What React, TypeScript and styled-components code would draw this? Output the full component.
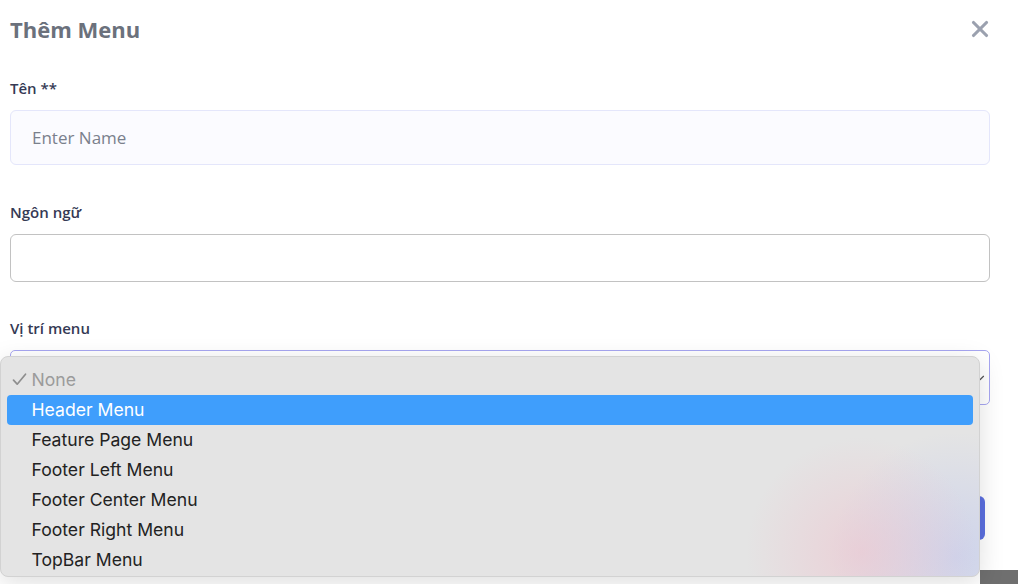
import React from "react";
import styled, { createGlobalStyle } from "styled-components";
import { X, ChevronDown } from "lucide-react";

const GlobalStyle = createGlobalStyle`
  html, body {
    margin: 0;
    padding: 0;
    background: #ffffff;
    overflow: hidden;
  }
  body {
    font-family: "Open Sans", "Noto Sans", sans-serif;
  }
`;

const ModalStyled = styled.div`
  display: flex;
  flex-direction: column;
  height: 570px;
  padding: 0 28px 0 10px;
  background: #ffffff;
`;

const HeaderStyled = styled.div`
  display: flex;
  align-items: center;
  justify-content: space-between;
  height: 58px;
`;

const TitleStyled = styled.h2`
  margin: 0;
  font-size: 22px;
  font-weight: 700;
  color: #6b717c;
`;

const CloseButtonStyled = styled.button`
  display: flex;
  align-items: center;
  justify-content: center;
  width: 28px;
  height: 28px;
  margin-right: -4px;
  padding: 0;
  border: none;
  background: transparent;
  color: #9ba1af;
`;

const FieldStyled = styled.div<{ $gap: number }>`
  display: flex;
  flex-direction: column;
  margin-top: ${(p) => p.$gap}px;
`;

const LabelStyled = styled.label`
  height: 20px;
  line-height: 20px;
  margin-bottom: 12px;
  font-size: 15px;
  font-weight: 600;
  color: #353a55;
`;

const TextInputStyled = styled.input<{ $tinted?: boolean }>`
  box-sizing: border-box;
  height: ${(p) => (p.$tinted ? 55 : 48)}px;
  padding: 0 21px;
  border: ${(p) => (p.$tinted ? "1px solid #e4e6fb" : "1.5px solid #c2c2c2")};
  border-radius: 6px;
  background: ${(p) => (p.$tinted ? "#fbfbff" : "#ffffff")};
  font-family: "Open Sans", "Noto Sans", sans-serif;
  font-size: 17px;
  color: #333;
  outline: none;

  &::placeholder {
    color: #7a808c;
  }
`;

const SelectBoxStyled = styled.div`
  position: relative;
  box-sizing: border-box;
  display: flex;
  align-items: center;
  justify-content: flex-end;
  height: 55px;
  padding-right: 2px;
  border: 1.5px solid #a7a6f1;
  border-radius: 5px;
  background: #ffffff;
  color: #555;
`;

const FooterStyled = styled.div`
  display: flex;
  justify-content: flex-end;
  margin-top: 91px;
  margin-right: 5px;
`;

const SaveButtonStyled = styled.button`
  height: 44px;
  width: 110px;
  border: none;
  border-radius: 6px;
  background: #5b6fe0;
  color: #fff;
  font-size: 15px;
`;

const BottomStripStyled = styled.div`
  display: flex;
  height: 14px;
  background: #6f6f6f;
`;

const StripWhiteStyled = styled.div`
  width: 980px;
  background: #ffffff;
`;

const DropdownStyled = styled.ul`
  position: absolute;
  top: 4.5px;
  left: -11.5px;
  box-sizing: border-box;
  width: 980px;
  height: 221px;
  margin: 0;
  padding: 8px 0 3px;
  list-style: none;
  border-radius: 8px;
  border: 1px solid #d2d2d2;
  background:
    radial-gradient(circle at 860px 195px, rgba(240, 192, 204, 0.55), rgba(240, 192, 204, 0) 115px),
    radial-gradient(circle at 955px 200px, rgba(196, 204, 238, 0.7), rgba(196, 204, 238, 0) 125px),
    #e4e4e4;
  box-shadow: 0 6px 26px rgba(0, 0, 0, 0.13);
  font-family: "Inter", "Liberation Sans", sans-serif;
  z-index: 10;
`;

const OptionStyled = styled.li<{ $active?: boolean; $muted?: boolean }>`
  display: flex;
  align-items: center;
  height: 30px;
  margin: 0 6px;
  border-radius: 4px;
  background: ${(p) => (p.$active ? "#3f9efc" : "transparent")};
  color: ${(p) => (p.$active ? "#ffffff" : p.$muted ? "#9b9b9b" : "#222222")};
  font-size: 17.6px;
`;

const CheckCellStyled = styled.span`
  display: inline-flex;
  align-items: center;
  width: 20px;
  padding-left: 5px;
  color: #8e8e8e;
`;

const CheckMark = () => (
  <svg width="15" height="13" viewBox="0 0 15 13" fill="none">
    <path d="M1.5 7.2 L5.2 11.2 L13.5 1.2" stroke="currentColor" strokeWidth="1.7" strokeLinecap="round" strokeLinejoin="round" />
  </svg>
);

const options = [
  "None",
  "Header Menu",
  "Feature Page Menu",
  "Footer Left Menu",
  "Footer Center Menu",
  "Footer Right Menu",
  "TopBar Menu",
];

export default function App() {
  return (
    <>
      <GlobalStyle />
      <ModalStyled>
        <HeaderStyled>
          <TitleStyled>Thêm Menu</TitleStyled>
          <CloseButtonStyled>
            <X size={26} strokeWidth={2.9} />
          </CloseButtonStyled>
        </HeaderStyled>

        <FieldStyled $gap={20}>
          <LabelStyled>Tên **</LabelStyled>
          <TextInputStyled $tinted placeholder="Enter Name" />
        </FieldStyled>

        <FieldStyled $gap={37}>
          <LabelStyled>Ngôn ngữ</LabelStyled>
          <TextInputStyled />
        </FieldStyled>

        <FieldStyled $gap={36}>
          <LabelStyled>Vị trí menu</LabelStyled>
          <SelectBoxStyled>
            <ChevronDown size={14} strokeWidth={2} />
            <DropdownStyled>
              {options.map((option, index) => (
                <OptionStyled key={option} $active={index === 1} $muted={index === 0}>
                  <CheckCellStyled>{index === 0 ? <CheckMark /> : null}</CheckCellStyled>
                  {option}
                </OptionStyled>
              ))}
            </DropdownStyled>
          </SelectBoxStyled>
        </FieldStyled>

        <FooterStyled>
          <SaveButtonStyled>Lưu</SaveButtonStyled>
        </FooterStyled>
      </ModalStyled>
      <BottomStripStyled>
        <StripWhiteStyled />
      </BottomStripStyled>
    </>
  );
}
